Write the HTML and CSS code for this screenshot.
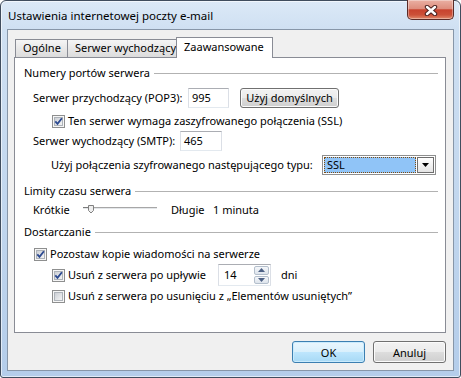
FILE: index.html
```html
<!DOCTYPE html>
<html lang="pl">
<head>
    <meta charset="UTF-8">
    <title>Ustawienia internetowej poczty e-mail</title>
    <link rel="stylesheet" href="styles.css">
</head>
<body>
    <div class="window">
        <div class="titlebar">
            <span class="title">Ustawienia internetowej poczty e-mail</span>
            <div class="close-btn">
                <svg width="14" height="11" viewBox="0 0 14 11">
                    <path d="M3 2 L11 9 M11 2 L3 9" stroke="#4b2220" stroke-width="4.4" stroke-linecap="round"/>
                    <path d="M3 2 L11 9 M11 2 L3 9" stroke="#ffffff" stroke-width="2.4" stroke-linecap="round"/>
                </svg>
            </div>
        </div>

        <div class="client">
            <div class="tabs">
                <div class="tab tab-general">Ogólne</div>
                <div class="tab tab-outgoing">Serwer wychodzący</div>
                <div class="tab tab-advanced active">Zaawansowane</div>
            </div>

            <div class="pane">
                <div class="group">Numery portów serwera</div>

                <div class="row row-pop3">
                    <span class="label label-pop3">Serwer przychodzący (POP3):</span>
                    <div class="textbox textbox-pop3">995</div>
                    <button class="btn btn-defaults">Użyj domyślnych</button>
                </div>

                <div class="row row-ssl">
                    <svg class="check" width="13" height="13" viewBox="0 0 13 13">
                        <defs>
                            <linearGradient id="cb-fill" x1="0" y1="0" x2="1" y2="1">
                                <stop offset="0" stop-color="#c9cdd3"/>
                                <stop offset="1" stop-color="#f7f7f7"/>
                            </linearGradient>
                        </defs>
                        <rect x="0.5" y="0.5" width="12" height="12" fill="#f6f6f6" stroke="#8e8f8f"/>
                        <rect x="2.5" y="2.5" width="8" height="8" fill="url(#cb-fill)" stroke="#aeb3b9"/>
                        <path d="M3.3 6.4 L5.5 8.9 L9.9 3.2" fill="none" stroke="#2c4a91" stroke-width="1.8"/>
                    </svg>
                    <span>Ten serwer wymaga zaszyfrowanego połączenia (SSL)</span>
                </div>

                <div class="row row-smtp">
                    <span class="label label-smtp">Serwer wychodzący (SMTP):</span>
                    <div class="textbox textbox-smtp">465</div>
                </div>

                <div class="row row-encrypt">
                    <span class="label label-encrypt">Użyj połączenia szyfrowanego następującego typu:</span>
                    <div class="select">
                        <span class="select-value">SSL</span>
                        <span class="select-arrow">
                            <svg width="7" height="4" viewBox="0 0 7 4"><path d="M0 0 H7 L3.5 4 Z" fill="#000"/></svg>
                        </span>
                    </div>
                </div>

                <div class="group group-timeout">Limity czasu serwera</div>

                <div class="row row-slider">
                    <span class="label label-short">Krótkie</span>
                    <svg class="slider" width="74" height="10" viewBox="0 0 74 10">
                        <rect x="0" y="2" width="74" height="1" fill="#a7a7a7"/>
                        <rect x="0" y="3" width="74" height="1" fill="#e4e7ea"/>
                        <rect x="0" y="2" width="6" height="1" fill="#7c7c7c"/>
                        <path d="M5.5 0.5 H10.5 V5.5 L8 8 L5.5 5.5 Z" fill="#eeeeee" stroke="#808080"/>
                    </svg>
                    <span class="label label-long">Długie</span>
                    <span>1 minuta</span>
                </div>

                <div class="group group-delivery">Dostarczanie</div>

                <div class="row row-keep">
                    <svg class="check" width="13" height="13" viewBox="0 0 13 13">
                        <rect x="0.5" y="0.5" width="12" height="12" fill="#f6f6f6" stroke="#8e8f8f"/>
                        <rect x="2.5" y="2.5" width="8" height="8" fill="url(#cb-fill)" stroke="#aeb3b9"/>
                        <path d="M3.3 6.4 L5.5 8.9 L9.9 3.2" fill="none" stroke="#2c4a91" stroke-width="1.8"/>
                    </svg>
                    <span>Pozostaw kopie wiadomości na serwerze</span>
                </div>

                <div class="row row-remove-after">
                    <svg class="check" width="13" height="13" viewBox="0 0 13 13">
                        <rect x="0.5" y="0.5" width="12" height="12" fill="#f6f6f6" stroke="#8e8f8f"/>
                        <rect x="2.5" y="2.5" width="8" height="8" fill="url(#cb-fill)" stroke="#aeb3b9"/>
                        <path d="M3.3 6.4 L5.5 8.9 L9.9 3.2" fill="none" stroke="#2c4a91" stroke-width="1.8"/>
                    </svg>
                    <span class="label label-after">Usuń z serwera po upływie</span>
                    <div class="spin">
                        <span class="spin-value">14</span>
                        <div class="spin-btns">
                            <span class="spin-btn">
                                <svg width="7" height="4" viewBox="0 0 7 4"><path d="M0 4 H7 L3.5 0 Z" fill="#4d6185"/></svg>
                            </span>
                            <span class="spin-btn">
                                <svg width="7" height="4" viewBox="0 0 7 4"><path d="M0 0 H7 L3.5 4 Z" fill="#4d6185"/></svg>
                            </span>
                        </div>
                    </div>
                    <span class="days">dni</span>
                </div>

                <div class="row row-remove-deleted">
                    <svg class="check" width="13" height="13" viewBox="0 0 13 13">
                        <rect x="0.5" y="0.5" width="12" height="12" fill="#f6f6f6" stroke="#8e8f8f"/>
                        <rect x="2.5" y="2.5" width="8" height="8" fill="url(#cb-fill)" stroke="#aeb3b9"/>
                    </svg>
                    <span>Usuń z serwera po usunięciu z „Elementów usuniętych”</span>
                </div>
            </div>

            <div class="buttons">
                <button class="btn btn-dialog default">OK</button>
                <button class="btn btn-dialog">Anuluj</button>
            </div>
        </div>
    </div>
</body>
</html>
```

FILE: styles.css
```css
* {
    box-sizing: border-box;
}
html, body {
    margin: 0;
    padding: 0;
}
body {
    width: 461px;
    height: 378px;
    overflow: hidden;
    background: #ffffff;
    font-family: "Noto Sans", "Open Sans", sans-serif;
    font-size: 11px;
    color: #000;
}

/* window frame */
.window {
    width: 461px;
    height: 378px;
    display: flex;
    flex-direction: column;
    border: 1px solid #404d5e;
    border-radius: 6px 6px 3px 3px;
    background: linear-gradient(to bottom, #dce9f7 0, #cfe0f2 28px, #b4cdea 100%);
    box-shadow: inset 0 0 0 1px rgba(255, 255, 255, 0.6);
}
.titlebar {
    height: 28px;
    display: flex;
    justify-content: space-between;
    align-items: flex-start;
}
.title {
    margin: 7px 0 0 7px;
    line-height: 16px;
    font-size: 11.5px;
}
.close-btn {
    width: 47px;
    height: 20px;
    margin: -1px 6px 0 0;
    padding-top: 2px;
    display: flex;
    align-items: center;
    justify-content: center;
    border: 1px solid #5a2b27;
    border-top: none;
    border-radius: 0 0 5px 5px;
    background: linear-gradient(to bottom, #eab0a3 0%, #de8e7e 45%, #c8432e 52%, #cc5038 78%, #e08a6c 100%);
    box-shadow: inset 0 0 0 1px rgba(255, 255, 255, 0.35);
}

/* client area */
.client {
    flex: 1;
    margin: 0 6px 6px;
    padding: 7px 0 0 6px;
    display: flex;
    flex-direction: column;
    border: 1px solid #8796a8;
    background: #f0f0f0;
}

/* tabs */
.tabs {
    height: 20px;
    margin-left: 1px;
    display: flex;
    align-items: flex-end;
}
.tab {
    height: 18px;
    line-height: 16px;
    padding-left: 7px;
    border: 1px solid #898c95;
    border-bottom: none;
    background: linear-gradient(to bottom, #f5f5f5 0%, #e8e8e8 50%, #dcdcdc 100%);
    white-space: nowrap;
}
.tab + .tab {
    margin-left: -1px;
}
.tab-general {
    width: 53px;
}
.tab-outgoing {
    width: 110px;
}
.tab-advanced {
    width: 97px;
}
.tab.active {
    position: relative;
    z-index: 1;
    height: 21px;
    margin-bottom: -1px;
    padding-top: 1px;
    background: #ffffff;
}

.pane {
    width: 432px;
    height: 276px;
    padding: 7px 7px 0 9px;
    border: 1px solid #898c95;
    background: #ffffff;
}

/* group headings */
.group {
    height: 16px;
    line-height: 16px;
    display: flex;
    align-items: center;
    white-space: nowrap;
}
.group::after {
    content: "";
    flex: 1;
    margin-left: 4px;
    border-top: 1px solid #b2b2b2;
}
.group-timeout {
    margin-top: 8px;
}
.group-delivery {
    margin-top: 6px;
}

/* rows */
.row {
    display: flex;
    align-items: center;
    margin-left: 9px;
    line-height: 16px;
    white-space: nowrap;
}
.row-pop3 {
    height: 20px;
    margin-top: 7px;
}
.row-ssl {
    height: 16px;
    margin-top: 5px;
    margin-left: 28px;
}
.row-smtp {
    height: 20px;
    margin-top: 2px;
}
.row-encrypt {
    height: 20px;
    margin-top: 4px;
    margin-left: 27px;
}
.row-slider {
    height: 16px;
    margin-top: 3px;
}
.row-keep {
    height: 16px;
    margin-top: 6px;
    margin-left: 10px;
}
.row-remove-after {
    height: 22px;
    margin-top: 2px;
    margin-left: 28px;
}
.row-remove-deleted {
    height: 16px;
    margin-top: 2px;
    margin-left: 28px;
}

.label {
    flex: none;
}
.label-pop3 {
    width: 155px;
}
.label-smtp {
    width: 147px;
}
.label-encrypt {
    width: 271px;
}
.label-short {
    width: 50px;
}
.label-long {
    width: 42px;
}
.label-after {
    width: 150px;
}
.check {
    flex: none;
    margin-right: 3px;
}
.slider {
    flex: none;
    margin-right: 14px;
}
.days {
    margin-left: 10px;
}

/* text boxes */
.textbox, .spin {
    height: 20px;
    line-height: 18px;
    padding-left: 3px;
    border: 1px solid #dbdfe6;
    border-top-color: #abadb3;
    border-bottom-color: #e3e9ef;
    background: #ffffff;
}
.textbox-pop3 {
    width: 41px;
}
.textbox-smtp {
    width: 42px;
}

/* buttons */
.btn {
    height: 20px;
    padding: 0;
    font: inherit;
    color: #000;
    border: 1px solid #707070;
    border-radius: 3px;
    background: linear-gradient(to bottom, #f2f2f2 0%, #ebebeb 49%, #dddddd 50%, #cfcfcf 100%);
    box-shadow: inset 0 0 0 1px #fbfbfb;
}
.btn-defaults {
    width: 99px;
    margin-left: 11px;
}
.buttons {
    width: 432px;
    margin-top: 8px;
    display: flex;
    justify-content: flex-end;
    gap: 8px;
}
.btn-dialog {
    width: 73px;
    height: 22px;
}
.btn.default {
    border-color: #3c7fb1;
    background: linear-gradient(to bottom, #eaf6fd 0%, #d9f0fc 49%, #bee6fd 50%, #a7d9f5 100%);
    box-shadow: inset 0 0 0 1px #c9ebfd;
}

/* combo box */
.select {
    width: 114px;
    height: 20px;
    padding: 1px;
    display: flex;
    border: 1px solid #8e8f8f;
    background: #ffffff;
}
.select-value {
    flex: 1;
    padding-left: 3px;
    line-height: 16px;
    background: #90c4f7;
    outline: 1px dotted #7d4c12;
    outline-offset: -1px;
}
.select-arrow {
    width: 17px;
    margin-left: 1px;
    display: flex;
    align-items: center;
    justify-content: center;
    border: 1px solid #6e6e6e;
    background: linear-gradient(to bottom, #ffffff, #e4e4e4);
}

/* spin box */
.spin {
    width: 53px;
    height: 22px;
    padding: 1px 1px 1px 0;
    display: flex;
}
.spin-value {
    flex: 1;
    padding-left: 5px;
    line-height: 18px;
}
.spin-btns {
    width: 15px;
    display: flex;
    flex-direction: column;
    gap: 1px;
}
.spin-btn {
    flex: 1;
    display: flex;
    align-items: center;
    justify-content: center;
    border: 1px solid #b4bfcc;
    border-radius: 2px;
    background: linear-gradient(to bottom, #f5f7fa, #dde4ec);
}
```
